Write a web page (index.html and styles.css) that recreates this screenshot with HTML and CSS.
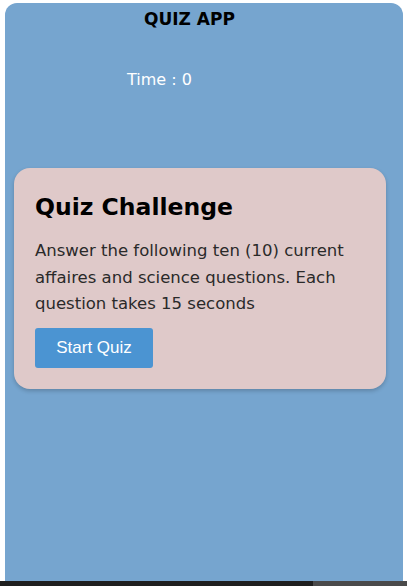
FILE: index.html
```html
<!DOCTYPE html>
<html>
<head>
<meta charset="utf-8">
<link rel="stylesheet" href="styles.css">
</head>
<body>
<div class="app">
  <h1 class="title">QUIZ APP</h1>
  <div class="timer">Time : 0</div>
  <div class="card">
    <h2 class="card-title">Quiz Challenge</h2>
    <p class="card-text">Answer the following ten (10) current affaires and science questions. Each question takes 15 seconds</p>
    <button class="start">Start Quiz</button>
  </div>
</div>
<div class="taskbar"><div class="task-dark"></div><div class="task-grey"></div></div>
</body>
</html>
```
FILE: styles.css
```css
html, body {
  margin: 0;
  padding: 0;
  background: #ffffff;
  font-family: "DejaVu Sans", "Noto Sans", sans-serif;
}
body {
  display: flex;
  flex-direction: column;
  height: 586px;
  overflow: hidden;
}
.app {
  margin: 3px 4px 0 5px;
  height: 578px;
  background: #76a5cf;
  border-radius: 12px 12px 0 0;
  display: flex;
  flex-direction: column;
}
.title {
  margin: 4px 0 0 0;
  padding-left: 139px;
  font-size: 17px;
  font-weight: 700;
  color: #000;
  line-height: 24px;
}
.timer {
  margin-top: 38px;
  padding-left: 122px;
  font-size: 16px;
  color: #ffffff;
  line-height: 22px;
}
.card {
  margin: 77px 17px 0 9px;
  height: 221px;
  box-sizing: border-box;
  background: #dfc9c9;
  border-radius: 16px;
  padding: 22px 20px 0 21px;
  box-shadow: 0 2px 4px rgba(0, 0, 0, 0.2);
}
.card-title {
  margin: 0;
  font-size: 23.5px;
  font-weight: 700;
  line-height: 34px;
  color: #000;
}
.card-text {
  margin: 14px 0 10px 0;
  font-size: 16.5px;
  line-height: 26.5px;
  color: #2a2a2a;
}
.start {
  display: block;
  width: 118px;
  height: 40px;
  border: none;
  border-radius: 3px;
  background: #4b94d2;
  color: #fff;
  font-family: "Liberation Sans", Arial, sans-serif;
  font-size: 17px;
}
.taskbar {
  display: flex;
  height: 5px;
}
.task-dark { width: 313px; background: #1f1f1f; }
.task-grey { flex: 1; background: #4a4a4a; }
```
